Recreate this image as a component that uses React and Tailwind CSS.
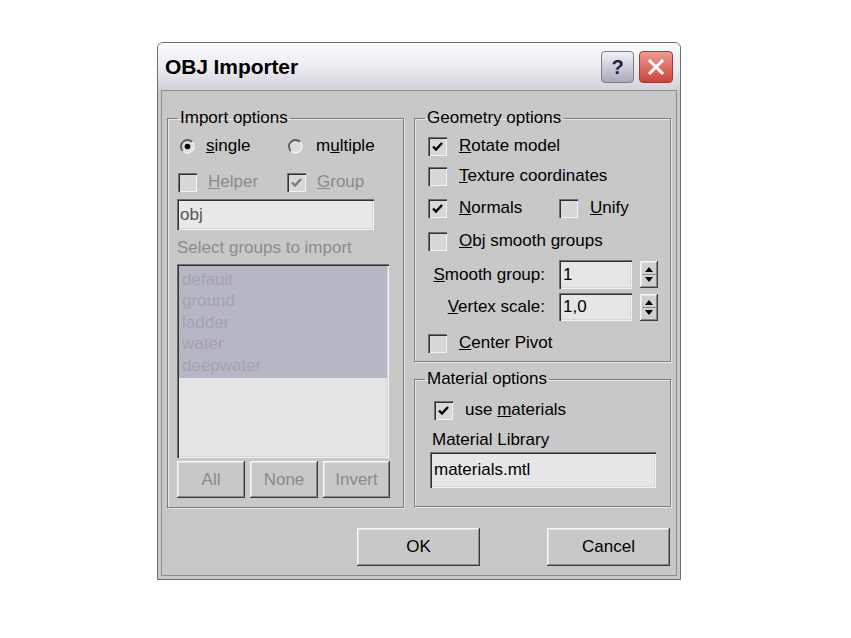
import { useState } from "react";

const sunken =
  "shadow-[inset_1px_1px_0_#707070,inset_2px_2px_0_#303030,inset_-1px_-1px_0_#f4f4f4,inset_-2px_-2px_0_#d6d6d6]";
const raised =
  "shadow-[inset_-1px_-1px_0_#3c3c3c,inset_1px_1px_0_#f6f6f6,inset_-2px_-2px_0_#8a8a8a,inset_2px_2px_0_#e2e2e2]";

const Check = ({ checked, disabled }) => (
  <span className={`flex h-[19px] w-[19px] shrink-0 items-center justify-center bg-[#d8d8d8] ${sunken}`}>
    {checked && (
      <svg width="13" height="13" viewBox="0 0 13 13">
        <path d="M2 6.5 L5 9.5 L11 3" fill="none" stroke={disabled ? "#7a7a7a" : "#000"} strokeWidth="2.4" />
      </svg>
    )}
  </span>
);

const Radio = ({ checked }) => (
  <svg width="15" height="15" viewBox="0 0 15 15" className="shrink-0">
    <circle cx="7.5" cy="7.5" r="6.5" fill="#dcdcdc" />
    <path d="M2.9 12.1 A6.5 6.5 0 0 1 12.1 2.9" fill="none" stroke="#5c5c5c" strokeWidth="1.8" />
    <path d="M12.1 2.9 A6.5 6.5 0 0 1 2.9 12.1" fill="none" stroke="#f2f2f2" strokeWidth="1.4" />
    {checked && <circle cx="7.5" cy="7.5" r="2.8" fill="#000" />}
  </svg>
);

const Spinner = () => (
  <div className={`flex h-[27px] w-[18px] flex-col bg-[#d0d0d0] ${raised}`}>
    <div className="flex flex-1 items-end justify-center pb-[2px]">
      <svg width="8" height="5" viewBox="0 0 8 5"><path d="M0 5 L4 0 L8 5Z" fill="#000" /></svg>
    </div>
    <div className="mx-[2px] h-px bg-[#8a8a8a]" />
    <div className="flex flex-1 items-start justify-center pt-[2px]">
      <svg width="8" height="5" viewBox="0 0 8 5"><path d="M0 0 L4 5 L8 0Z" fill="#000" /></svg>
    </div>
  </div>
);

// etched group box; the legend sits on the top line
const Group = ({ title, className = "", inner = "", children }) => (
  <fieldset className={`border border-[#7e7e7e] shadow-[inset_1px_1px_0_#e8e8e8,1px_1px_0_#e8e8e8] ${className}`}>
    <legend className="ml-[10px] px-[2px] leading-[20px]">{title}</legend>
    <div className={inner}>{children}</div>
  </fieldset>
);

const Btn = ({ children, className = "", disabled }) => (
  <button
    className={`flex items-center justify-center bg-[#c8c8c8] ${raised} ${disabled ? "text-[#8a8a8a]" : "text-black"} ${className}`}
  >
    {children}
  </button>
);

const groups = ["default", "ground", "ladder", "water", "deepwater"];

export default function App() {
  const [lib, setLib] = useState("materials.mtl");

  return (
    <div className="min-h-[638px] bg-white pl-[157px] pt-[42px] font-['Liberation_Sans',Arial,sans-serif] text-[17px] text-black">
      <div className="flex h-[538px] w-[524px] flex-col rounded-t-[6px] border border-[#6c6c6c] bg-[#c8c8c8] px-[3px] pb-[3px]">
        {/* title bar */}
        <div className="-mx-[3px] flex h-[47px] shrink-0 items-center rounded-t-[5px] bg-linear-to-b from-[#fbfbfd] via-[#ececf1] to-[#d2d2da] pl-[7px] pr-[7px]">
          <span className="text-[21px] font-bold tracking-[-0.1px]">OBJ Importer</span>
          <div className="ml-auto flex gap-[5px]">
            <div className="flex h-[32px] w-[33px] items-center justify-center rounded-[4px] border border-[#7c7c8e] bg-linear-to-b from-[#f2f2f8] to-[#a9a9bb] text-[20px] font-bold text-[#1c2440]">
              ?
            </div>
            <div className="flex h-[32px] w-[34px] items-center justify-center rounded-[4px] border border-[#9c3a3a] bg-linear-to-b from-[#f09a92] to-[#c8443c]">
              <svg width="20" height="20" viewBox="0 0 20 20">
                <path d="M3 3 L17 17 M17 3 L3 17" stroke="#fff" strokeWidth="3" />
              </svg>
            </div>
          </div>
        </div>

        {/* client area */}
        <div className="flex flex-1 flex-col border border-[#8e8e8e] px-[5px] pb-[9px] pt-[17px]">
          <div className="grid grid-cols-[237px_257px] gap-x-[10px]">
            <Group title="Import options" className="h-[400px]" inner="px-[9px]">
              <div className="mt-[8px] flex h-[20px] items-center">
                <div className="ml-[3px] flex w-[108px] items-center gap-[11px]">
                  <Radio checked />
                  <span><u>s</u>ingle</span>
                </div>
                <div className="flex items-center gap-[13px]">
                  <Radio />
                  <span>m<u>u</u>ltiple</span>
                </div>
              </div>
              <div className="mt-[16px] flex h-[20px] items-center text-[#8a8a8a]">
                <div className="ml-[1px] flex w-[109px] items-center gap-[11px]">
                  <Check />
                  <span><u>H</u>elper</span>
                </div>
                <div className="flex items-center gap-[11px]">
                  <Check checked disabled />
                  <span><u>G</u>roup</span>
                </div>
              </div>
              <div className={`mt-[7px] flex h-[31px] w-[197px] items-center bg-[#e8e8e8] pl-[3px] text-[#555] ${sunken}`}>obj</div>
              <div className="mt-[8px] leading-[20px] text-[#8c8c8c]">Select groups to import</div>
              <div className={`mt-[6px] flex h-[194px] w-[212px] flex-col bg-[#e4e4e4] p-[2px] ${sunken}`}>
                <div className="bg-[#b6b7c4] pb-[2px] pl-[3px] pt-[3px]">
                  {groups.map((g) => (
                    <div key={g} className="h-[21.4px] leading-[21px] text-[#a3a3ad]">{g}</div>
                  ))}
                </div>
              </div>
              <div className="mt-[3px] flex gap-[5px]">
                <Btn disabled className="h-[37px] w-[68px]">All</Btn>
                <Btn disabled className="h-[37px] w-[68px]">None</Btn>
                <Btn disabled className="h-[37px] w-[67px]">Invert</Btn>
              </div>
            </Group>

            <div className="flex flex-col">
              <Group title="Geometry options" className="h-[254px]" inner="pl-[13px]">
                <div className="mt-[8px] flex h-[20px] items-center gap-[12px]">
                  <Check checked />
                  <span><u>R</u>otate model</span>
                </div>
                <div className="mt-[10px] flex h-[20px] items-center gap-[12px]">
                  <Check />
                  <span><u>T</u>exture coordinates</span>
                </div>
                <div className="mt-[12px] flex h-[20px] items-center">
                  <div className="flex w-[131px] items-center gap-[12px]">
                    <Check checked />
                    <span><u>N</u>ormals</span>
                  </div>
                  <div className="flex items-center gap-[12px]">
                    <Check />
                    <span><u>U</u>nify</span>
                  </div>
                </div>
                <div className="mt-[13px] flex h-[20px] items-center gap-[12px]">
                  <Check />
                  <span><u>O</u>bj smooth groups</span>
                </div>
                <div className="mt-[9px] flex items-center">
                  <span className="w-[117px] text-right"><u>S</u>mooth group:</span>
                  <div className={`ml-[14px] flex h-[29px] w-[73px] items-center bg-[#e6e6e6] pl-[4px] ${sunken}`}>1</div>
                  <div className="ml-[8px]"><Spinner /></div>
                </div>
                <div className="mt-[4px] flex items-center">
                  <span className="w-[117px] text-right"><u>V</u>ertex scale:</span>
                  <div className={`ml-[14px] flex h-[28px] w-[73px] items-center bg-[#e6e6e6] pl-[4px] ${sunken}`}>1,0</div>
                  <div className="ml-[8px]"><Spinner /></div>
                </div>
                <div className="mt-[12px] flex h-[20px] items-center gap-[12px]">
                  <Check />
                  <span><u>C</u>enter Pivot</span>
                </div>
              </Group>

              <Group title="Material options" className="mt-[7px] h-[138px]" inner="pl-[15px]">
                <div className="ml-[4px] mt-[11px] flex h-[20px] items-center gap-[12px]">
                  <Check checked />
                  <span>use <u>m</u>aterials</span>
                </div>
                <div className="ml-[2px] mt-[10px] leading-[20px]">Material Library</div>
                <input
                  value={lib}
                  onChange={(e) => setLib(e.target.value)}
                  className={`mt-[2px] h-[36px] w-[226px] bg-[#e6e6e6] pl-[4px] outline-none ${sunken}`}
                />
              </Group>
            </div>
          </div>

          <div className="mt-auto flex justify-end gap-[67px] pr-[1px]">
            <Btn className="h-[38px] w-[123px]">OK</Btn>
            <Btn className="h-[38px] w-[123px]">Cancel</Btn>
          </div>
        </div>
      </div>
    </div>
  );
}
